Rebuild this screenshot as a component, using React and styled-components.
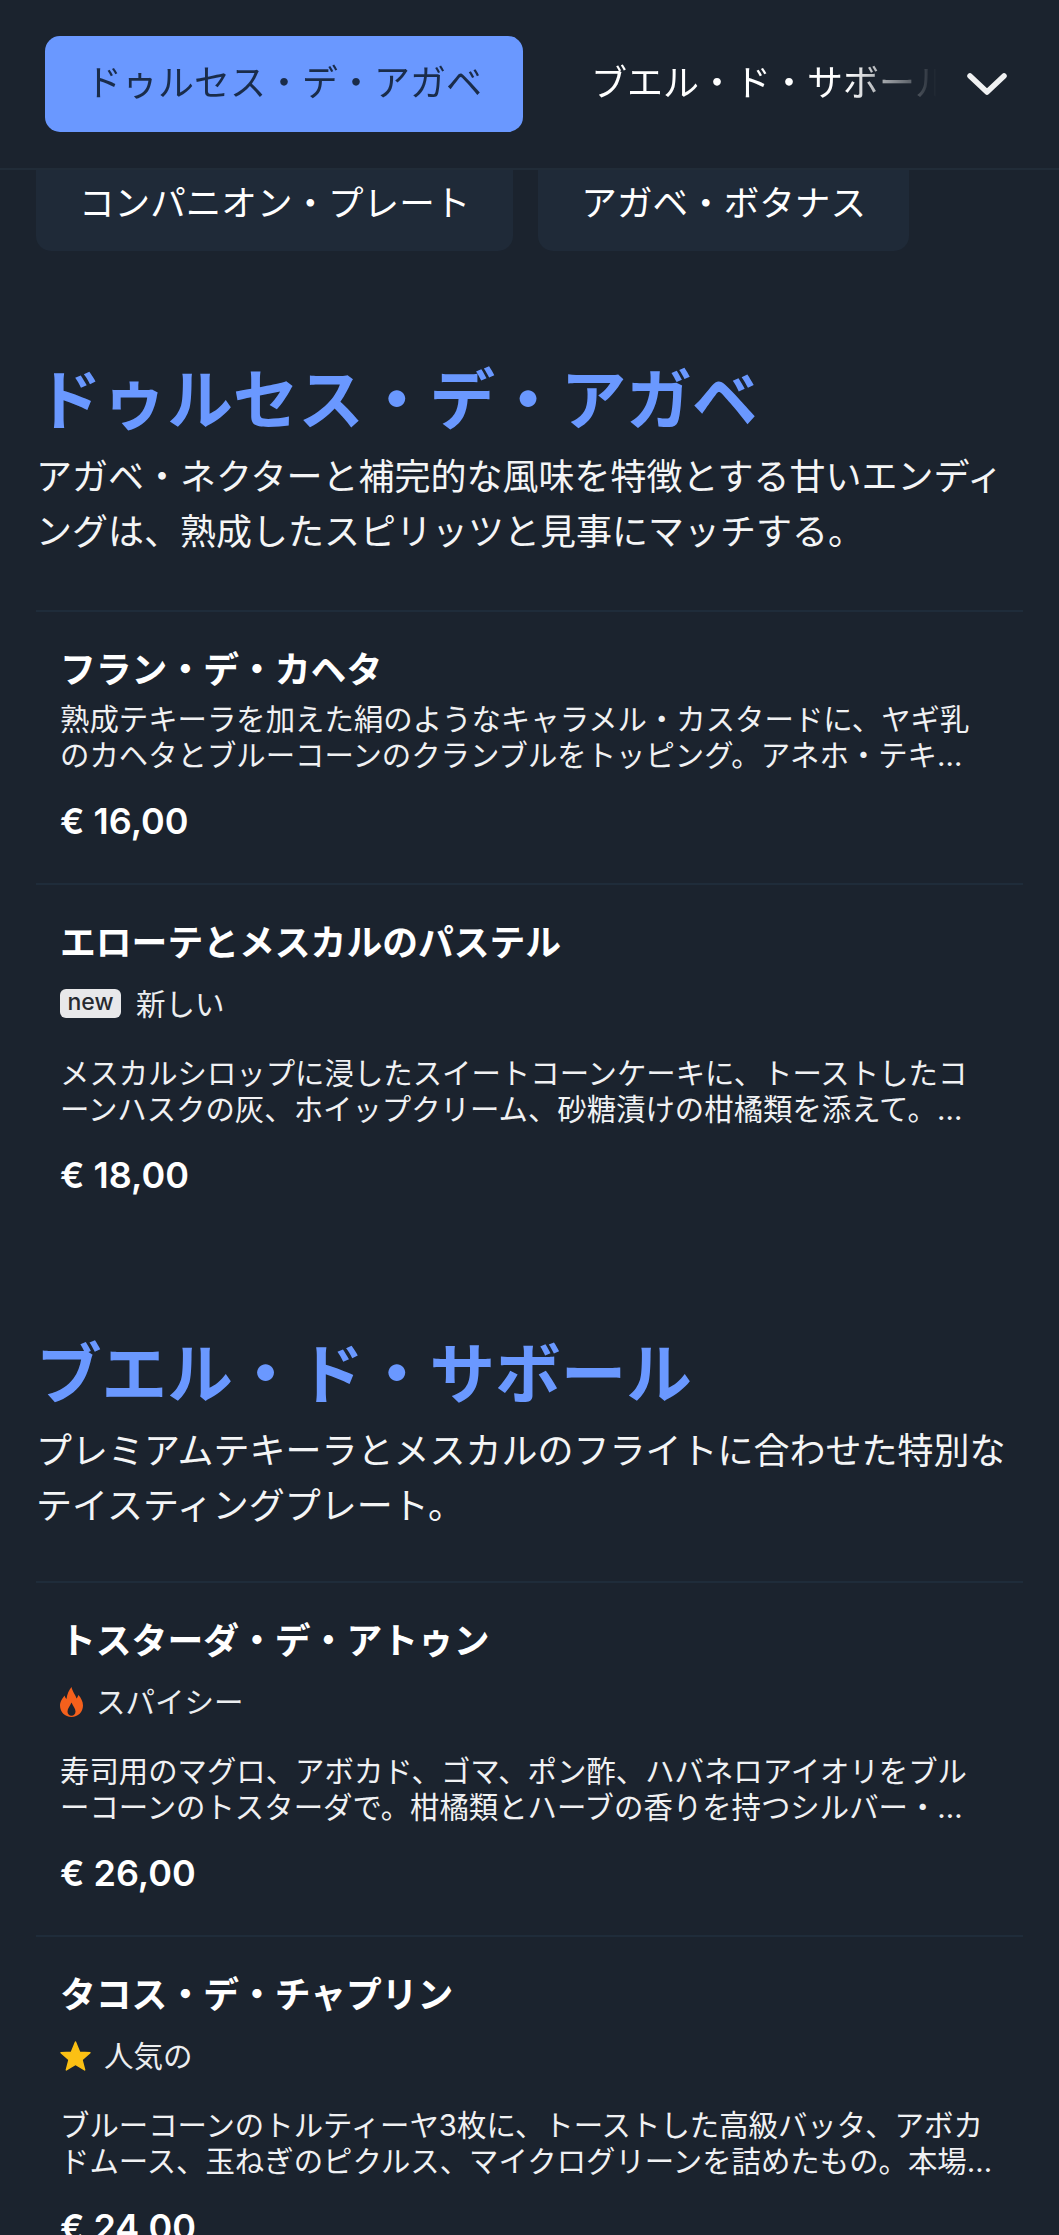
import React from "react";
import styled, { createGlobalStyle } from "styled-components";

const Global = createGlobalStyle`
  html, body { margin: 0; padding: 0; background: #1b232e; }
  body { font-family: Inter, "Noto Sans CJK JP", sans-serif; color: #fff; overflow-x: hidden; }
  * { box-sizing: border-box; }
`;

const Page = styled.div`
  height: 2235px;
  overflow: hidden;
  padding-top: 155px;
  background: #1b232e;
`;

const Header = styled.header`
  position: fixed;
  top: 0; left: 0; right: 0;
  z-index: 2;
  height: 170px;
  background: #1b232e;
  border-bottom: 2px solid #212c38;
  display: flex;
  align-items: flex-start;
  padding: 36px 0 0 45px;
`;

const TabScroller = styled.div`
  flex: 0 0 892px;
  display: flex;
  gap: 68px;
  overflow: hidden;
  -webkit-mask-image: linear-gradient(to right, #000 90%, transparent 100%);
  mask-image: linear-gradient(to right, #000 90%, transparent 100%);
`;

const ActiveTab = styled.button`
  flex: none;
  width: 478px;
  height: 96px;
  border: 0;
  border-radius: 15px;
  background: #6a98ff;
  color: #1a2c4a;
  font: 400 36px/1 Inter, "Noto Sans CJK JP", sans-serif;
  padding: 0 0 2px;
`;

const PlainTab = styled.button`
  flex: none;
  height: 96px;
  border: 0;
  background: none;
  color: #fff;
  font: 400 36px/1 Inter, "Noto Sans CJK JP", sans-serif;
  padding: 0 0 2px;
  white-space: nowrap;
`;

const Chevron = styled.svg`
  flex: none;
  width: 40px;
  height: 22px;
  margin: 37px 0 0 30px;
`;

const ChipRow = styled.div`
  display: flex;
  gap: 25px;
  padding-left: 36px;
`;

const Chip = styled.div`
  height: 96px;
  padding: 0 43px 29px;
  border-radius: 15px;
  background: #1f2a38;
  color: #fff;
  font-size: 35.6px;
  line-height: 1;
  display: flex;
  align-items: flex-end;
  white-space: nowrap;
`;

const Section = styled.section`
  padding: ${p => p.$top}px 36px 0;
`;

const Heading = styled.h2`
  margin: 0;
  color: #6a98ff;
  font-size: 65.6px;
  font-weight: 700;
  line-height: 76px;
`;

const Intro = styled.p`
  margin: 12px 0 ${p => p.$after}px;
  font-size: 36px;
  line-height: 55px;
  color: #f4f5f6;
`;

const Item = styled.article`
  border-top: 2px solid #1f2c3a;
  padding: 36px 27px 40px 24px;
`;

const Title = styled.h3`
  margin: 0;
  font-size: 35.8px;
  font-weight: 700;
  line-height: 44px;
`;

const TagRow = styled.div`
  display: flex;
  align-items: center;
  height: 40px;
  margin-top: 17px;
  font-size: 29.5px;
  color: #eceef0;
`;

const NewBadge = styled.span`
  width: 61px;
  height: 29px;
  margin: 3px 15px 0 0;
  border-radius: 6px;
  background: #e8e8ea;
  color: #262a30;
  font-size: 23px;
  font-weight: 500;
  line-height: 26px;
  text-align: center;
`;

const Flame = styled.svg`
  flex: none;
  width: 23px;
  height: 30px;
  margin: 3px 13px 0 0;
`;

const Star = styled.svg`
  flex: none;
  width: 31px;
  height: 30px;
  margin: 3px 13px 0 0;
`;

const Desc = styled.p`
  margin: ${p => (p.$tagged ? 34 : 10)}px 0 25px;
  font-size: 29.4px;
  line-height: 36px;
  color: #f0f1f3;
`;

const Price = styled.div`
  font-size: 36px;
  font-weight: 600;
  line-height: 44px;
`;

const sections = [
  {
    top: 111,
    after: 50,
    title: "ドゥルセス・デ・アガベ",
    intro: "アガベ・ネクターと補完的な風味を特徴とする甘いエンディングは、熟成したスピリッツと見事にマッチする。",
    items: [
      { name: "フラン・デ・カヘタ", desc: "熟成テキーラを加えた絹のようなキャラメル・カスタードに、ヤギ乳のカヘタとブルーコーンのクランブルをトッピング。アネホ・テキ…", price: "€ 16,00" },
      { name: "エローテとメスカルのパステル", tag: "new", desc: "メスカルシロップに浸したスイートコーンケーキに、トーストしたコーンハスクの灰、ホイップクリーム、砂糖漬けの柑橘類を添えて。…", price: "€ 18,00" },
    ],
  },
  {
    top: 99,
    after: 47,
    title: "ブエル・ド・サボール",
    intro: "プレミアムテキーラとメスカルのフライトに合わせた特別なテイスティングプレート。",
    items: [
      { name: "トスターダ・デ・アトゥン", tag: "spicy", desc: "寿司用のマグロ、アボカド、ゴマ、ポン酢、ハバネロアイオリをブルーコーンのトスターダで。柑橘類とハーブの香りを持つシルバー・…", price: "€ 26,00" },
      { name: "タコス・デ・チャプリン", tag: "popular", desc: "ブルーコーンのトルティーヤ3枚に、トーストした高級バッタ、アボカドムース、玉ねぎのピクルス、マイクログリーンを詰めたもの。本場…", price: "€ 24,00" },
    ],
  },
];

const Tag = ({ kind }) => {
  if (kind === "new") return <TagRow><NewBadge>new</NewBadge>新しい</TagRow>;
  if (kind === "spicy")
    return (
      <TagRow>
        <Flame viewBox="0 0 23 30">
          <path
            fill="#f4601c"
            fillRule="evenodd"
            d="M11.5 0C12.5 5 15.5 7.5 16.5 11.5C17.5 10.5 18 9 18.5 8C21 11 23 14.5 23 18.5C23 25 18 30 11.5 30C5 30 0 25 0 18.5C0 14 3 11 4.5 8.5C5 10 5.5 11 6.5 12C7 7 9 3 11.5 0ZM11.5 15.5C10 19 7.5 21.5 7.5 24.5C7.5 27 9.2 28.8 11.5 28.8C13.8 28.8 15.5 27 15.5 24.5C15.5 21.5 13 19 11.5 15.5Z"
          />
        </Flame>
        スパイシー
      </TagRow>
    );
  return (
    <TagRow>
      <Star viewBox="0 0 31 30">
        <polygon
          fill="#fbc014"
          stroke="#fbc014"
          strokeWidth="1.4"
          strokeLinejoin="round"
          points="15.5,1 19.7,11.2 30,11.8 22,18.6 24.7,29 15.5,23.3 6.3,29 9,18.6 1,11.8 11.3,11.2"
        />
      </Star>
      人気の
    </TagRow>
  );
};

export default function App() {
  return (
    <Page>
      <Global />
      <Header>
        <TabScroller>
          <ActiveTab>ドゥルセス・デ・アガベ</ActiveTab>
          <PlainTab>ブエル・ド・サボール</PlainTab>
        </TabScroller>
        <Chevron viewBox="0 0 40 22" fill="none">
          <path d="M3 3 L20 19 L37 3" stroke="#f0f1f2" strokeWidth="5.5" strokeLinecap="round" strokeLinejoin="round" />
        </Chevron>
      </Header>
      <ChipRow>
        <Chip>コンパニオン・プレート</Chip>
        <Chip>アガベ・ボタナス</Chip>
      </ChipRow>
      {sections.map(s => (
        <Section key={s.title} $top={s.top}>
          <Heading>{s.title}</Heading>
          <Intro $after={s.after}>{s.intro}</Intro>
          {s.items.map(it => (
            <Item key={it.name}>
              <Title>{it.name}</Title>
              {it.tag && <Tag kind={it.tag} />}
              <Desc $tagged={!!it.tag}>{it.desc}</Desc>
              <Price>{it.price}</Price>
            </Item>
          ))}
        </Section>
      ))}
    </Page>
  );
}
